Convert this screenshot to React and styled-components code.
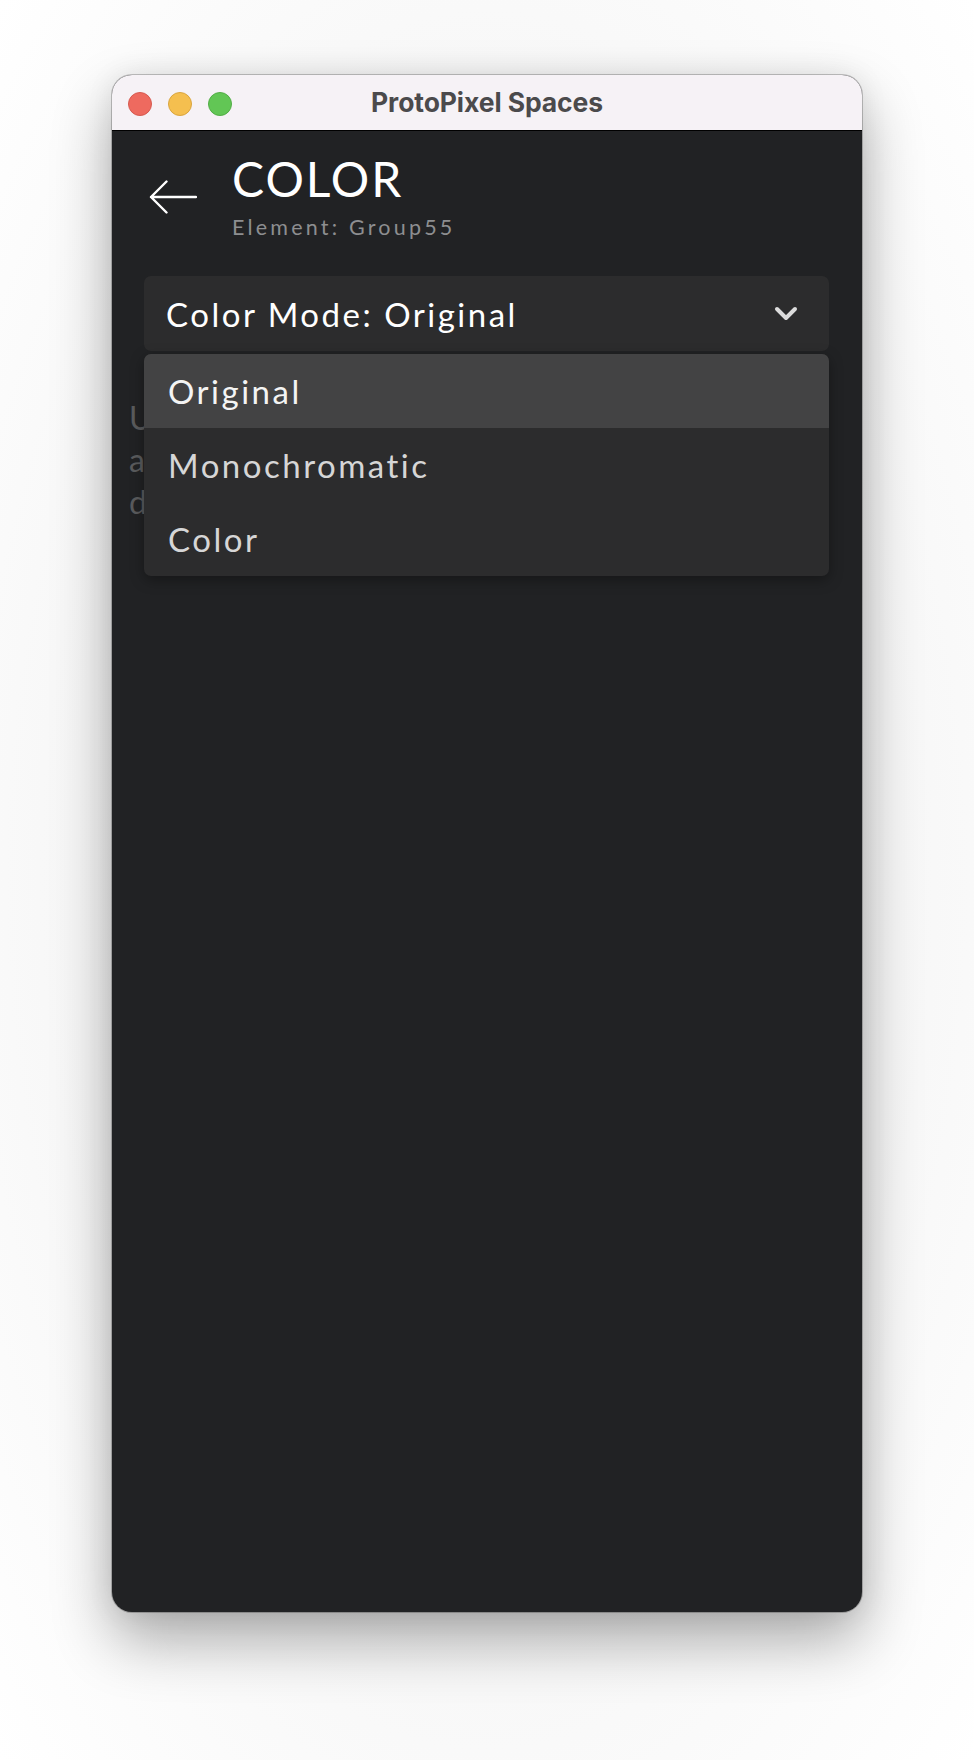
import React from "react";
import styled, { createGlobalStyle } from "styled-components";

const Global = createGlobalStyle`
  html, body { margin: 0; padding: 0; background: #ffffff; }
  body { font-family: "Lato", "Noto Sans", sans-serif; }
  * { box-sizing: border-box; }
`;

const Page = styled.div`
  width: 974px;
  height: 1760px;
  padding: 75px 0 0 112px;
  background: radial-gradient(ellipse at 50% 50%, #f2f2f2 0%, #f7f7f7 60%, #ffffff 100%);
`;

const Window = styled.div`
  width: 750px;
  height: 1537px;
  border-radius: 20px;
  overflow: hidden;
  display: flex;
  flex-direction: column;
  background: #212224;
  box-shadow: 0 0 0 1px rgba(0, 0, 0, 0.22), 0 28px 60px rgba(0, 0, 0, 0.32),
    0 0 28px rgba(0, 0, 0, 0.08);
`;

const TitleBar = styled.div`
  position: relative;
  height: 56px;
  flex: none;
  background: #f6f2f6;
  border-bottom: 1px solid #000;
  display: flex;
  align-items: center;
  justify-content: center;
`;

const Lights = styled.div`
  position: absolute;
  left: 16px;
  top: 17px;
  display: flex;
  gap: 16px;
`;

const Light = styled.span`
  width: 24px;
  height: 24px;
  border-radius: 50%;
  background: ${(p) => p.$c};
  border: 1px solid ${(p) => p.$b};
`;

const WinTitle = styled.div`
  font-family: "Inter", "Liberation Sans", sans-serif;
  font-weight: 700;
  font-size: 26.5px;
  color: #4b4a4c;
  letter-spacing: -0.1px;
  margin-top: -1px;
`;

const Content = styled.div`
  position: relative;
  flex: 1;
  display: flex;
  flex-direction: column;
`;

const Header = styled.div`
  display: flex;
  align-items: center;
  padding: 24px 0 0 37px;
  gap: 35px;
`;

const BackButton = styled.button`
  background: none;
  border: 0;
  padding: 0;
  width: 48px;
  height: 34px;
  display: flex;
  cursor: pointer;
`;

const TitleBlock = styled.div`
  display: flex;
  flex-direction: column;
`;

const Title = styled.h1`
  margin: 0;
  font-family: "Lato", sans-serif;
  font-weight: 400;
  font-size: 48px;
  line-height: 48px;
  letter-spacing: 2px;
  color: #ffffff;
`;

const Subtitle = styled.div`
  margin-top: 12px;
  font-size: 21.5px;
  line-height: 24px;
  letter-spacing: 3.2px;
  color: #8d8e90;
`;

const SelectWrap = styled.div`
  position: relative;
  margin: 37px 33px 0 32px;
`;

const SelectBox = styled.div`
  height: 75px;
  border-radius: 7px;
  background: #2c2c2d;
  display: flex;
  align-items: center;
  justify-content: space-between;
  padding: 0 31px 0 22px;
  font-size: 33px;
  letter-spacing: 2.5px;
  color: #ffffff;
`;

const Menu = styled.ul`
  position: absolute;
  z-index: 2;
  top: 78px;
  left: 0;
  right: 0;
  margin: 0;
  padding: 0;
  list-style: none;
  border-radius: 7px;
  overflow: hidden;
  background: #2c2c2d;
  box-shadow: 0 4px 14px rgba(0, 0, 0, 0.35);
`;

const MenuItem = styled.li`
  height: 74px;
  display: flex;
  align-items: center;
  padding-left: 24px;
  font-size: 33px;
  letter-spacing: 2.5px;
  color: ${(p) => (p.$active ? "#f4f4f4" : "#d6d6d6")};
  background: ${(p) => (p.$active ? "#434344" : "transparent")};
`;

const Description = styled.p`
  margin: 46px 40px 0 17px;
  font-size: 32px;
  line-height: 42px;
  letter-spacing: 1.2px;
  color: #5a5b5d;
`;

const ArrowIcon = () => (
  <svg width="48" height="34" viewBox="0 0 48 34" fill="none">
    <path
      d="M47 17H2M17.5 1.5L2 17l15.5 15.5"
      stroke="#ffffff"
      strokeWidth="2.4"
      strokeLinecap="round"
      strokeLinejoin="round"
    />
  </svg>
);

const ChevronIcon = () => (
  <svg width="24" height="16" viewBox="0 0 24 16" fill="none">
    <path
      d="M3 3l9 9 9-9"
      stroke="#dcdcdc"
      strokeWidth="4"
      strokeLinecap="round"
      strokeLinejoin="round"
    />
  </svg>
);

const options = ["Original", "Monochromatic", "Color"];

export default function App() {
  const selected = "Original";
  return (
    <>
      <Global />
      <Page>
        <Window>
          <TitleBar>
            <Lights>
              <Light $c="#ee6a5f" $b="#d65a50" />
              <Light $c="#f5bf4f" $b="#d9a53f" />
              <Light $c="#62c655" $b="#52ad46" />
            </Lights>
            <WinTitle>ProtoPixel Spaces</WinTitle>
          </TitleBar>
          <Content>
            <Header>
              <BackButton aria-label="Back">
                <ArrowIcon />
              </BackButton>
              <TitleBlock>
                <Title>COLOR</Title>
                <Subtitle>Element: Group55</Subtitle>
              </TitleBlock>
            </Header>
            <SelectWrap>
              <SelectBox>
                <span>Color Mode: {selected}</span>
                <ChevronIcon />
              </SelectBox>
              <Menu>
                {options.map((o) => (
                  <MenuItem key={o} $active={o === selected}>
                    {o}
                  </MenuItem>
                ))}
              </Menu>
            </SelectWrap>
            <Description>
              Use the color mode to set
              <br />
              all lights of this element to
              <br />
              display their original colors.
            </Description>
          </Content>
        </Window>
      </Page>
    </>
  );
}
